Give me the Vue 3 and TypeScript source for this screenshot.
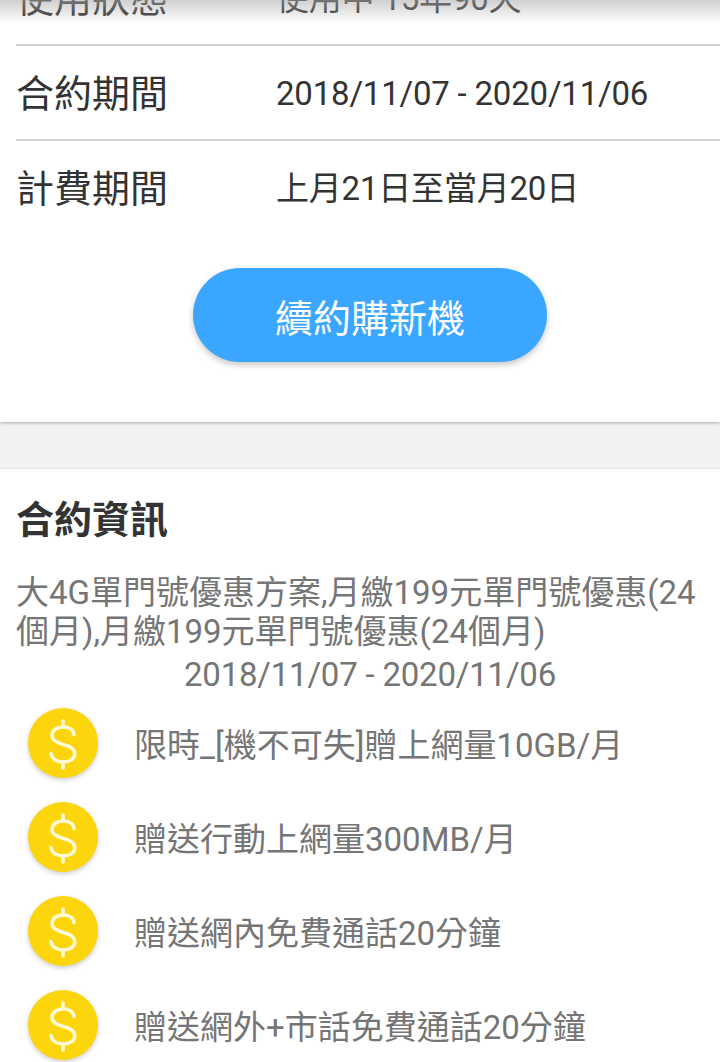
<template>
  <div class="page">
    <div class="top-shade"></div>
    <section class="card summary">
      <div v-for="row in rows" :key="row.label" class="info-row">
        <span class="info-label">{{ row.label }}</span>
        <span class="info-value">{{ row.value }}</span>
      </div>
      <div class="action">
        <button class="renew-btn">續約購新機</button>
      </div>
    </section>
    <section class="card contract">
      <h2 class="contract-title">合約資訊</h2>
      <p class="contract-desc">大4G單門號優惠方案,月繳199元單門號優惠(24個月),月繳199元單門號優惠(24個月)</p>
      <p class="contract-date">2018/11/07 - 2020/11/06</p>
      <ul class="perks">
        <li v-for="perk in perks" :key="perk" class="perk">
          <span class="coin">
            <svg viewBox="0 0 70 70" width="70" height="70" fill="none" stroke="#fff9d6" stroke-width="3.6" stroke-linecap="round">
              <path d="M46 26.5c-.6-4.800-5-7.500-10.800-7.500-6.400 0-11.200 3.300-11.200 8.600 0 5.200 4.500 7.200 11.200 8.800 7 1.700 11.600 3.900 11.600 9.200 0 5.400-5 8.400-11.600 8.400-6.500 0-11.400-3-12.200-8.500" />
              <path d="M35 13v6M35 54v6" />
            </svg>
          </span>
          <span class="perk-text">{{ perk }}</span>
        </li>
      </ul>
    </section>
  </div>
</template>

<script setup lang="ts">
const rows = [
  { label: '使用狀態', value: '使用中 15年90天' },
  { label: '合約期間', value: '2018/11/07 - 2020/11/06' },
  { label: '計費期間', value: '上月21日至當月20日' },
]

const perks = [
  '限時_[機不可失]贈上網量10GB/月',
  '贈送行動上網量300MB/月',
  '贈送網內免費通話20分鐘',
  '贈送網外+市話免費通話20分鐘',
]
</script>

<style scoped>
.page {
  position: relative;
  height: 1062px;
  overflow: hidden;
  background: #f2f2f2;
  font-family: Roboto, "Noto Sans CJK TC", sans-serif;
}

.top-shade {
  position: absolute;
  top: 0;
  left: 0;
  right: 0;
  height: 24px;
  background: linear-gradient(to bottom, rgba(170, 170, 170, 0.55), rgba(255, 255, 255, 0));
  z-index: 2;
}

.card {
  background: #fff;
}

.summary {
  margin-top: -49px;
  height: 471px;
  padding-left: 16px;
  margin-bottom: 46px;
  box-shadow: 0 1px 3px rgba(0, 0, 0, 0.3);
}

.info-row {
  display: flex;
  align-items: center;
  height: 93px;
  border-bottom: 2px solid #d4d4d4;
}

.info-row:nth-child(3) {
  border-bottom: none;
}

.info-label {
  width: 260px;
  font-size: 38px;
  line-height: 44px;
  margin-top: 2px;
  color: #333;
}

.info-value {
  font-size: 33px;
  letter-spacing: -0.2px;
  line-height: 40px;
  margin-top: 3px;
  color: #333;
}

.action {
  display: flex;
  justify-content: center;
  padding: 34px 0 0 4px;
}

.renew-btn {
  width: 354px;
  height: 94px;
  border: none;
  border-radius: 47px;
  background: #3ba6ff;
  color: #fff;
  font-family: inherit;
  font-size: 38px;
  box-shadow: 0 3px 6px rgba(0, 0, 0, 0.22);
}

.contract {
  height: 594px;
  padding: 26px 16px 0;
  border-top: 1px solid #e4e4e4;
}

.contract-title {
  margin: 0;
  font-size: 38px;
  line-height: 50px;
  font-weight: 700;
  color: #333;
}

.contract-desc {
  margin: 28px 0 0;
  font-size: 33px;
  line-height: 39px;
  color: #757575;
}

.contract-date {
  margin: 4px 0 0;
  padding-left: 20px;
  text-align: center;
  font-size: 33px;
  letter-spacing: -0.2px;
  line-height: 39px;
  color: #757575;
}

.perks {
  list-style: none;
  margin: 14px 0 0;
  padding: 0 0 0 12px;
  display: flex;
  flex-direction: column;
  gap: 24px;
}

.perk {
  display: flex;
  align-items: center;
  gap: 36px;
}

.coin {
  display: block;
  width: 70px;
  height: 70px;
  border-radius: 50%;
  background: #fdd50c;
  box-shadow: 0 2px 5px rgba(0, 0, 0, 0.2);
}

.coin svg {
  display: block;
}

.perk-text {
  font-size: 33px;
  color: #757575;
}
</style>
